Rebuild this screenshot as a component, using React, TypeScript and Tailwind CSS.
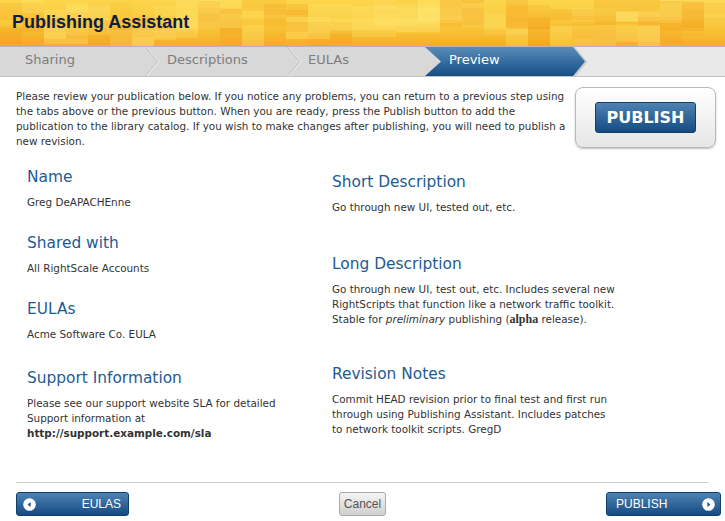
import React from "react";

const blocks: { x: number; y: number; w: number; h: number; c: string }[] = (() => {
  const out: { x: number; y: number; w: number; h: number; c: string }[] = [];
  let seed = 11;
  const rnd = () => {
    seed = (seed * 9301 + 49297) % 233280;
    return seed / 233280;
  };
  for (let x = 0; x < 725; x += 22) {
    const n = 2 + Math.floor(rnd() * 2);
    for (let i = 0; i < n; i++) {
      const y = Math.floor(rnd() * 36) - 4;
      const h = 10 + Math.floor(rnd() * 22);
      const w = 22 * (1 + Math.floor(rnd() * 2));
      const light = rnd() > 0.45;
      out.push({
        x,
        y,
        w,
        h,
        c: light ? `rgba(255,234,120,${0.15 + rnd() * 0.2})` : `rgba(242,150,20,${0.08 + rnd() * 0.16})`,
      });
    }
  }
  return out;
})();

function Header() {
  return (
    <div className="relative h-[46px] overflow-hidden">
      <svg className="absolute inset-0" width="725" height="46">
        <defs>
          <linearGradient id="hg" x1="0" y1="0" x2="0" y2="1">
            <stop offset="0" stopColor="#fcd64c" />
            <stop offset="0.6" stopColor="#f9c638" />
            <stop offset="1" stopColor="#f5ad26" />
          </linearGradient>
        </defs>
        <rect width="725" height="46" fill="url(#hg)" />
        {blocks.map((b, i) => (
          <rect key={i} x={b.x} y={b.y} width={b.w} height={b.h} fill={b.c} />
        ))}
      </svg>
      <h1 className="relative pl-[12px] pt-[10px] font-['Liberation_Sans',Arial,sans-serif] text-[18px] font-bold leading-[24px] text-[#0f1d42]">
        Publishing Assistant
      </h1>
    </div>
  );
}

function Chevron() {
  return (
    <svg className="absolute left-full top-0 z-10" width="16" height="29">
      <polyline points="0.5,0 13,14.5 0.5,29" fill="none" stroke="#b9b9b9" strokeWidth="1" />
      <polyline points="1.5,0 14,14.5 1.5,29" fill="none" stroke="#efefef" strokeWidth="1" />
    </svg>
  );
}

function Tabs() {
  const tabs = [
    { label: "Sharing", w: "w-[145px]", pl: "pl-[25px]", sep: true },
    { label: "Descriptions", w: "w-[142px]", pl: "pl-[22px]", sep: true },
    { label: "EULAs", w: "w-[138px]", pl: "pl-[21px]", sep: false },
  ];
  return (
    <div className="flex h-[31px] border-t border-b border-t-[#b5b5b5] border-b-[#c4c4c4] bg-[#e9e9e9] font-['DejaVu_Sans',sans-serif] text-[13px] leading-[26px]">
      {tabs.map((t) => (
        <div key={t.label} className={`relative ${t.w} ${t.pl} bg-[#d8d8d8] text-[#7d7d7d]`}>
          {t.label}
          {t.sep && <Chevron />}
        </div>
      ))}
      <div className="relative w-[170px] pl-[24px] text-white">
        <svg className="absolute left-0 top-0" width="170" height="29">
          <defs>
            <linearGradient id="tb" x1="0" y1="0" x2="0" y2="1">
              <stop offset="0" stopColor="#5a8cb8" />
              <stop offset="1" stopColor="#134f86" />
            </linearGradient>
          </defs>
          <rect x="0" y="0" width="18" height="29" fill="#d8d8d8" />
          <polygon points="0,0 149,0 161,14.5 149,29 0,29 16,14.5" fill="rgba(0,0,0,0.12)" transform="translate(1.5,0.5)" />
          <polygon points="0,0 148,0 160,14.5 148,29 0,29 16,14.5" fill="url(#tb)" />
        </svg>
        <span className="relative">Preview</span>
      </div>
    </div>
  );
}

function Section({ title, children, gap }: { title: string; children: React.ReactNode; gap: string }) {
  return (
    <div className={gap}>
      <h2 className="text-[15.4px] leading-[20px] text-[#1d5b93]">{title}</h2>
      <div className="mt-[8px] text-[10.4px] leading-[15px] text-[#333]">{children}</div>
    </div>
  );
}

function CircleArrow({ dir }: { dir: "left" | "right" }) {
  return (
    <svg width="13" height="13" viewBox="0 0 13 13">
      <circle cx="6.5" cy="6.5" r="6.3" fill="#fff" />
      {dir === "left" ? (
        <polygon points="7.6,4 4.6,6.5 7.6,9" fill="#1d5487" />
      ) : (
        <polygon points="5.4,4 8.4,6.5 5.4,9" fill="#1d5487" />
      )}
    </svg>
  );
}

export default function App() {
  return (
    <div className="flex h-[521px] w-[725px] flex-col overflow-hidden bg-white font-['DejaVu_Sans',sans-serif]">
      <Header />
      <Tabs />
      <div className="flex">
        <p className="ml-[16px] mt-[12px] w-[552px] text-[10.4px] leading-[15px] text-[#333]">
          Please review your publication below. If you notice any problems, you can return to a previous step using
          the tabs above or the previous button. When you are ready, press the Publish button to add the publication to
          the library catalog. If you wish to make changes after publishing, you will need to publish a new revision.
        </p>
        <div className="ml-auto mr-[9px] mt-[10px] flex h-[61px] w-[141px] items-center justify-center rounded-[8px] border border-[#b9b9b9] bg-gradient-to-b from-white to-[#e6e6e6] shadow-[0_1px_2px_rgba(0,0,0,0.25)]">
          <div className="flex h-[31px] w-[101px] items-center justify-center rounded-[3px] border border-[#0f3f6d] bg-gradient-to-b from-[#4d82b2] to-[#134c82] text-[16px] font-bold text-white">
            PUBLISH
          </div>
        </div>
      </div>
      <div className="mt-[18px] flex">
        <div className="ml-[27px] w-[305px]">
          <Section title="Name" gap="mb-[23px]">Greg DeAPACHEnne</Section>
          <Section title="Shared with" gap="mb-[23px]">All RightScale Accounts</Section>
          <Section title="EULAs" gap="mb-[26px]">Acme Software Co. EULA</Section>
          <Section title="Support Information" gap="">
            <div className="w-[260px]">
              Please see our support website SLA for detailed Support information at{" "}
              <b className="font-bold">http://support.example.com/sla</b>
            </div>
          </Section>
        </div>
        <div className="mt-[5px] w-[286px]">
          <Section title="Short Description" gap="mb-[39px]">Go through new UI, tested out, etc.</Section>
          <Section title="Long Description" gap="mb-[37px]">
            Go through new UI, test out, etc. Includes several new RightScripts that function like a network traffic
            toolkit. Stable for <i>preliminary</i> publishing (
            <b className="font-['Liberation_Serif',serif] text-[12px] font-bold">alpha</b> release).
          </Section>
          <Section title="Revision Notes" gap="">
            Commit HEAD revision prior to final test and first run through using Publishing Assistant. Includes patches
            to network toolkit scripts. GregD
          </Section>
        </div>
      </div>
      <div className="mt-auto mb-[5px]">
        <div className="mx-[16px] w-[692px] border-t border-[#cccccc]" />
        <div className="mt-[9px] flex items-center pl-[16px] font-['Liberation_Sans',Arial,sans-serif] text-[12px]">
          <button className="flex h-[24px] w-[113px] items-center rounded-[3px] border border-[#0f3f6d] bg-gradient-to-b from-[#4d82b2] to-[#134c82] pl-[6px] pr-[7px] text-white">
            <CircleArrow dir="left" />
            <span className="ml-auto">EULAS</span>
          </button>
          <button className="ml-[210px] h-[24px] w-[47px] rounded-[3px] border border-[#aaaaaa] bg-gradient-to-b from-[#f5f5f5] to-[#cfcfcf] text-[#555]">
            Cancel
          </button>
          <button className="ml-[220px] flex h-[24px] w-[115px] items-center rounded-[3px] border border-[#0f3f6d] bg-gradient-to-b from-[#4d82b2] to-[#134c82] pl-[9px] pr-[5px] text-white">
            <span>PUBLISH</span>
            <span className="ml-auto">
              <CircleArrow dir="right" />
            </span>
          </button>
        </div>
      </div>
    </div>
  );
}
